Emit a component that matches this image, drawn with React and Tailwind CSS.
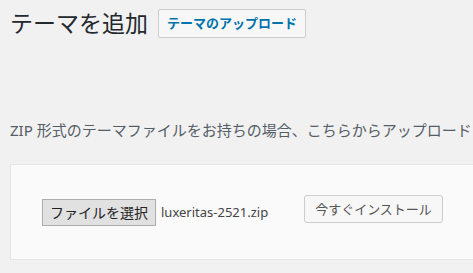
import React from 'react';

const font = { fontFamily: '"Noto Sans", "Noto Sans CJK JP", sans-serif' };

export default function App() {
  return (
    <div className="w-[473px] h-[273px] overflow-hidden bg-[#f1f1f1]" style={font}>
      <div className="flex items-center pl-[10px] pt-[9px]">
        <h1 className="text-[23px] leading-[29px] font-normal text-[#23282d]">テーマを追加</h1>
        <button className="ml-[10px] h-[29px] px-[8px] bg-[#f7f7f7] border border-[#cccccc] rounded-[2px] text-[13px] font-semibold text-[#0073aa] leading-none">
          テーマのアップロード
        </button>
      </div>

      <p className="mt-[82px] pl-[10px] text-[15px] leading-[20px] text-[#555d66] whitespace-nowrap">
        ZIP 形式のテーマファイルをお持ちの場合、こちらからアップロードしてインストールできます。
      </p>

      <div className="mt-[24px] ml-[10px] w-[480px] h-[96px] bg-[#fafafa] border border-[#e5e5e5] flex items-start pl-[31px] pt-[30px]">
        <div className="flex items-center w-[262px] mt-[4px]">
          <button className="h-[27px] px-[7px] bg-[#e1e1e1] border border-[#adadad] text-[14px] text-[#222] leading-none">
            ファイルを選択
          </button>
          <span className="ml-[5px] text-[13px] text-[#444]">luxeritas-2521.zip</span>
        </div>
        <button className="h-[28px] w-[139px] bg-[#f7f7f7] border border-[#cccccc] rounded-[3px] text-[13px] text-[#555] leading-none">
          今すぐインストール
        </button>
      </div>
    </div>
  );
}
